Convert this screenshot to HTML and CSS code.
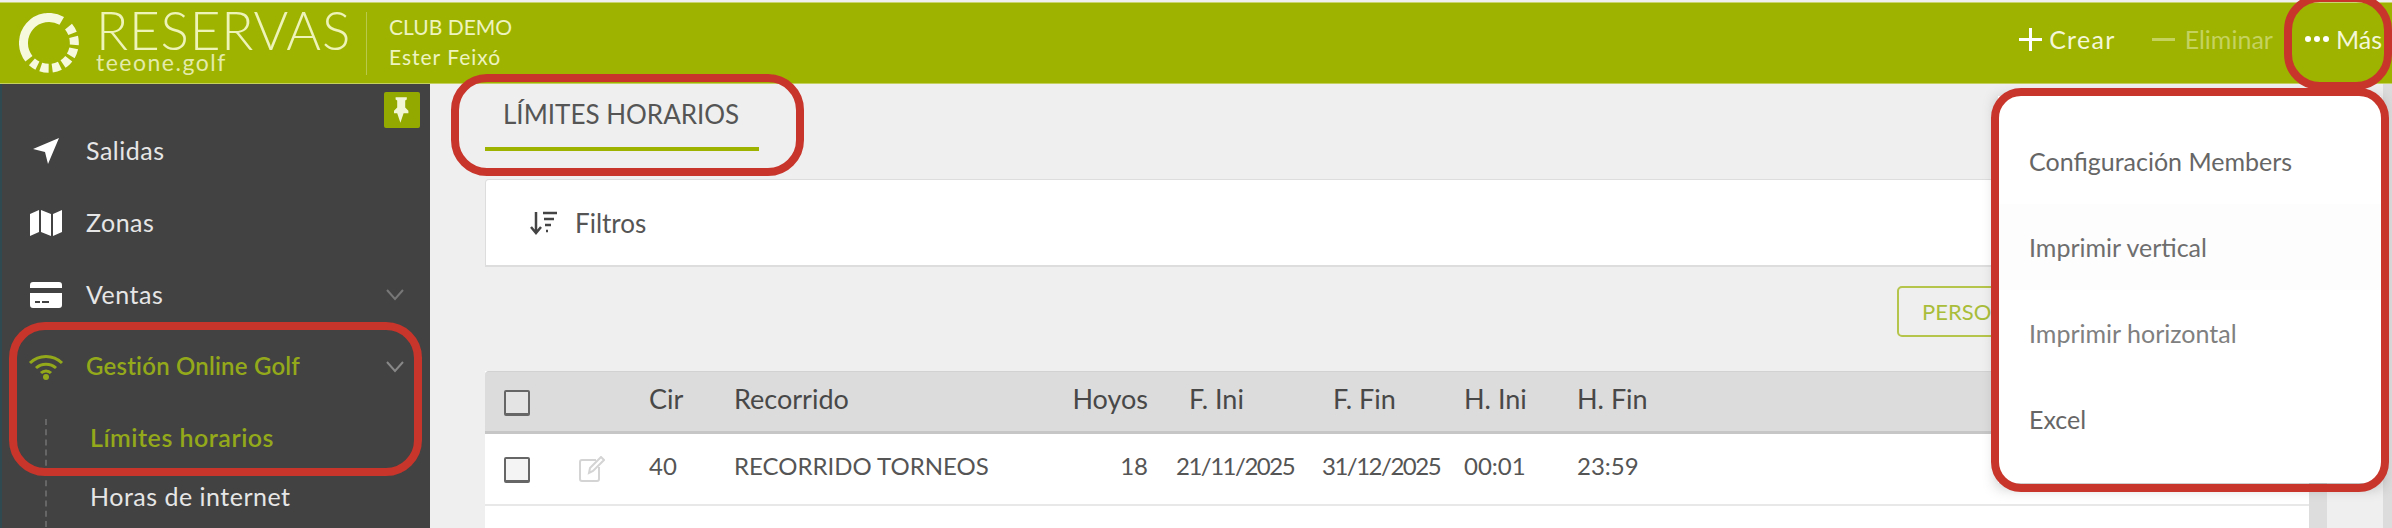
FILE: index.html
```html
<!DOCTYPE html>
<html>
<head>
	<title>Límites horarios</title>
	<link rel="stylesheet" href="styles.css">
</head>
<body>
	<header class="topbar">
		<div class="brand">
			<svg class="ring" viewBox="0 0 60 60">
				<path d="M9.900 45.700A25.500 25.500 0 0 1 42.750 7.900"/>
				<path d="M49.500 13.600A25.500 25.500 0 0 1 12.900 48.900" stroke-dasharray="8 3.500"/>
			</svg>
			<div class="brand-text">
				<div class="brand-name">RESERVAS</div>
				<div class="brand-site">teeone.golf</div>
			</div>
		</div>
		<div class="club">
			<div>CLUB DEMO</div>
			<div>Ester Feixó</div>
		</div>
		<div class="actions">
			<div class="action crear"><span class="plus"></span>Crear</div>
			<div class="action off"><span class="minus"></span>Eliminar</div>
			<div class="action more"><span class="dots"><i></i><i></i><i></i></span>Más</div>
		</div>
	</header>

	<div class="layout">
		<nav class="sidebar">
			<div class="pin-row">
				<div class="pin">
					<svg viewBox="0 0 20 32"><path d="M4 0h12v3l-2 1v9l4 4v3h-6l-4 12-4-12H0v-3l4-4V4L2 3V0z"/></svg>
				</div>
			</div>
			<div class="item">
				<svg class="icon" viewBox="0 0 26 26"><path d="M26 0 15 26l-3-12L0 11z"/></svg>
				<span>Salidas</span>
			</div>
			<div class="item">
				<svg class="icon" viewBox="0 0 32 26"><path d="M0 4l9-4v22l-9 4zM11 0l10 4v22l-10-4zM23 4l9-4v22l-9 4z"/></svg>
				<span>Zonas</span>
			</div>
			<div class="item">
				<svg class="icon" viewBox="0 0 32 26"><path d="M3 0h26a3 3 0 0 1 3 3v3H0V3a3 3 0 0 1 3-3zM0 11h32v12a3 3 0 0 1-3 3H3a3 3 0 0 1-3-3zm5 8v2h5v-2zm7 0v2h7v-2z" fill-rule="evenodd"/></svg>
				<span>Ventas</span>
				<svg class="chevron" viewBox="0 0 18 12"><path d="M1 1l8 9 8-9"/></svg>
			</div>
			<div class="item active">
				<svg class="icon" viewBox="0 0 36 26">
					<path class="wave" d="M2 9a23 23 0 0 1 32 0M8 14a15 15 0 0 1 20 0M13 19a7 7 0 0 1 10 0"/>
					<circle cx="18" cy="23" r="3"/>
				</svg>
				<span>Gestión Online Golf</span>
				<svg class="chevron" viewBox="0 0 18 12"><path d="M1 1l8 9 8-9"/></svg>
			</div>
			<div class="submenu">
				<div class="subitem active">Límites horarios</div>
				<div class="subitem">Horas de internet</div>
			</div>
		</nav>

		<main class="main">
			<div class="tabs">
				<div class="tab">LÍMITES HORARIOS</div>
			</div>
			<div class="filters">
				<svg class="filter-icon" viewBox="0 0 28 24"><path d="M6 1v20M1 16l5 6 5-6"/><path d="M13 2h14M14 8h10M15 14h6M16 20h2"/></svg>
				<span>Filtros</span>
			</div>
			<div class="toolbar">
				<div class="btn-outline">PERSO</div>
			</div>
			<div class="table-wrap">
				<div class="table">
					<div class="cols thead">
						<div class="check-cell"><span class="check"></span></div>
						<div></div>
						<div>Cir</div>
						<div class="first">Recorrido</div>
						<div class="num">Hoyos</div>
						<div class="ini">F. Ini</div>
						<div class="fin">F. Fin</div>
						<div>H. Ini</div>
						<div>H. Fin</div>
					</div>
					<div class="cols trow">
						<div class="check-cell"><span class="check"></span></div>
						<div class="check-cell">
							<svg class="edit" viewBox="0 0 26 26"><path d="M17 4H3a2 2 0 0 0-2 2v17a2 2 0 0 0 2 2h15a2 2 0 0 0 2-2V11"/><path d="M10 17l1-5L22 1l3 3-11 11z"/></svg>
						</div>
						<div>40</div>
						<div class="first">RECORRIDO TORNEOS</div>
						<div class="num">18</div>
						<div class="date">21/11/2025</div>
						<div class="date">31/12/2025</div>
						<div>00:01</div>
						<div>23:59</div>
					</div>
				</div>
				<div class="scroll"></div>
			</div>
		</main>
		<div class="edge"></div>
	</div>

	<div class="menu">
		<div class="menu-item">Configuración Members</div>
		<div class="menu-item hover">Imprimir vertical</div>
		<div class="menu-item light">Imprimir horizontal</div>
		<div class="menu-item">Excel</div>
	</div>

	<div class="mark mark-tab"></div>
	<div class="mark mark-nav"></div>
	<div class="mark mark-more"></div>
	<div class="mark mark-menu"></div>
</body>
</html>
```

FILE: styles.css
```css
* {
	box-sizing: border-box;
}
html, body {
	margin: 0;
	height: 528px;
	overflow: hidden;
}
body {
	position: relative;
	background: #efefef;
	font-family: Lato, "Liberation Sans", sans-serif;
	font-size: 24px;
	color: #555;
}

/* top bar */
.topbar {
	display: flex;
	align-items: center;
	height: 82px;
	margin-top: 2px;
	background: #9db300;
	border-top: 1px solid #c9d56f;
	border-bottom: 1px solid #c4d060;
	color: #fff;
}
.brand {
	display: flex;
	align-items: center;
	height: 63px;
	padding-left: 19px;
	padding-right: 18px;
	border-right: 1px solid #b9c94c;
}
.ring {
	flex: none;
	width: 60px;
	height: 60px;
	margin-right: 17px;
	fill: none;
	stroke: #f6f9dc;
	stroke-width: 9;
}
.brand-text {
	width: 252px;
}
.brand-name {
	font-size: 53px;
	font-weight: 300;
	letter-spacing: .8px;
	line-height: 42px;
	margin-top: -5px;
	color: #eef3b8;
}
.brand-site {
	font-size: 23px;
	letter-spacing: 1.500px;
	line-height: 22px;
	color: #e4ebaa;
}
.club {
	padding-left: 22px;
	font-size: 21px;
	line-height: 30px;
	margin-top: -3px;
	color: #eef3c0;
}
.club div + div {
	letter-spacing: 1px;
}
.actions {
	display: flex;
	align-items: center;
	margin-left: auto;
	margin-right: 10px;
	margin-top: -8px;
	font-size: 25px;
}
.action {
	display: flex;
	align-items: center;
	margin-left: 36px;
	color: #f4f7d8;
}
.action.crear {
	letter-spacing: 1.300px;
}
.action.off {
	color: #c5d25e;
}
.plus {
	width: 23px;
	height: 23px;
	margin-right: 7px;
	background: linear-gradient(#fff, #fff) center / 100% 3px no-repeat, linear-gradient(#fff, #fff) center / 3px 100% no-repeat;
}
.minus {
	width: 23px;
	height: 3px;
	margin-right: 10px;
	background: #c5d25e;
}
.action.more {
	margin-left: 32px;
}
.dots {
	display: flex;
	gap: 3px;
	margin-right: 7px;
}
.dots i {
	width: 6px;
	height: 6px;
	border-radius: 50%;
	background: #fff;
}

/* page */
.layout {
	display: flex;
	height: 444px;
}
.sidebar {
	flex: none;
	width: 430px;
	background: #424242;
	border-left: 2px solid #2f4a50;
	color: #eee;
	font-size: 25px;
}
.pin-row {
	display: flex;
	justify-content: flex-end;
	height: 31px;
	padding: 8px 10px 0 0;
}
.pin {
	display: flex;
	align-items: center;
	justify-content: center;
	flex: none;
	width: 36px;
	height: 36px;
	border-radius: 2px;
	background: #94a900;
}
.pin svg {
	width: 16px;
	height: 28px;
	fill: #f3f6d5;
}
.item {
	display: flex;
	align-items: center;
	height: 72px;
	letter-spacing: .5px;
	color: #e6e6e6;
}
.item span {
	padding-bottom: 3px;
}
.item .icon {
	flex: none;
	width: 32px;
	height: 26px;
	margin-left: 28px;
	margin-right: 24px;
	fill: #fff;
}
.item.active {
	font-size: 24px;
	font-weight: 600;
	letter-spacing: .2px;
	color: #94a91a;
}
.item.active .icon {
	width: 36px;
	margin-left: 26px;
	margin-right: 22px;
	fill: #94a91a;
}
.wave {
	fill: none;
	stroke: #94a91a;
	stroke-width: 3;
}
.chevron {
	width: 18px;
	height: 12px;
	margin-left: auto;
	margin-right: 26px;
	fill: none;
	stroke: #777;
	stroke-width: 2;
}
.item.active .chevron {
	stroke: #888;
}
.submenu {
	margin-top: 16px;
	margin-left: 43px;
	border-left: 2px dashed #666;
}
.subitem {
	display: flex;
	align-items: center;
	height: 60px;
	padding-left: 43px;
	padding-bottom: 3px;
	letter-spacing: .5px;
	color: #e6e6e6;
}
.subitem.active {
	height: 36px;
	margin-bottom: 12px;
	padding-bottom: 0;
	font-weight: 600;
	color: #94a91a;
}

.main {
	flex: 1;
	min-width: 0;
	padding: 0 56px 0 55px;
}
.tabs {
	display: flex;
	height: 95px;
}
.tab {
	width: 274px;
	height: 67px;
	padding: 14px 0 0 18px;
	border-bottom: 4px solid #9db300;
	font-size: 26px;
	color: #555;
}
.filters {
	display: flex;
	align-items: center;
	height: 88px;
	padding-left: 44px;
	background: #fff;
	border: 1px solid #ddd;
	border-bottom-width: 2px;
	border-radius: 4px 4px 0 0;
	font-size: 26px;
}
.filter-icon {
	width: 28px;
	height: 24px;
	margin-right: 17px;
	fill: none;
	stroke: #444;
	stroke-width: 2.500;
}
.toolbar {
	display: flex;
	justify-content: flex-end;
	height: 104px;
	padding-top: 19px;
}
.btn-outline {
	display: flex;
	align-items: center;
	width: 430px;
	height: 51px;
	padding-left: 23px;
	font-size: 22px;
	color: #a9bd3a;
	border: 2px solid #b5c44a;
	border-radius: 5px;
}
.table-wrap {
	display: flex;
	height: 157px;
}
.table {
	flex: 1;
	min-width: 0;
	background: #fff;
}
.scroll {
	flex: none;
	width: 18px;
	background: #ddd;
}
.cols {
	display: grid;
	grid-template-columns: 75px 70px 86px 336px 105px 146px 142px 113px 1fr;
	align-items: center;
	padding-left: 19px;
}
.cols > div {
	padding-bottom: 6px;
}
.trow > div {
	padding-bottom: 8px;
}
.cols > .check-cell {
	padding-bottom: 0;
}
.thead {
	height: 63px;
	background: #dcdcdc;
	border-top: 1px solid #d2d2d2;
	border-bottom: 3px solid #c6c6c6;
	border-radius: 4px 4px 0 0;
	font-size: 27px;
	color: #484848;
}
.trow {
	height: 72px;
	border-bottom: 2px solid #e8e8e8;
}
.first {
	margin-left: -1px;
}
.num {
	padding-right: 28px;
	text-align: right;
}
.ini {
	padding-left: 13px;
}
.fin {
	padding-left: 11px;
}
.date {
	letter-spacing: -1.500px;
}
.check {
	display: block;
	width: 26px;
	height: 26px;
	margin-top: 2px;
	border: 2px solid #666;
	border-bottom-width: 3px;
	border-radius: 2px;
	background: #f4f4f4;
}
.thead .check {
	background: #e4e4e4;
}
.edit {
	display: block;
	width: 26px;
	height: 26px;
	fill: none;
	stroke: #d4d4d4;
	stroke-width: 2;
}
.edge {
	flex: none;
	width: 9px;
	background: #dcdcdc;
}

/* dropdown */
.menu {
	position: absolute;
	top: 96px;
	left: 1998px;
	width: 383px;
	padding: 22px 0 21px;
	background: #fff;
	box-shadow: 0 3px 14px rgba(0, 0, 0, .3);
	font-size: 25px;
}
.menu-item {
	display: flex;
	align-items: center;
	height: 86px;
	padding-left: 31px;
	color: #666;
}
.menu-item.hover {
	background: #fdfdfd;
	color: #6e6e6e;
}
.menu-item.light {
	color: #808080;
}

/* red annotations drawn over the screenshot */
.mark {
	position: absolute;
	border: 8px solid #c8352b;
	border-radius: 36px;
}
.mark-tab {
	top: 74px;
	left: 451px;
	width: 353px;
	height: 102px;
}
.mark-nav {
	top: 322px;
	left: 9px;
	width: 413px;
	height: 154px;
}
.mark-more {
	top: -6px;
	left: 2284px;
	width: 108px;
	height: 96px;
}
.mark-menu {
	top: 88px;
	left: 1991px;
	width: 398px;
	height: 404px;
	border-radius: 30px;
}
```
